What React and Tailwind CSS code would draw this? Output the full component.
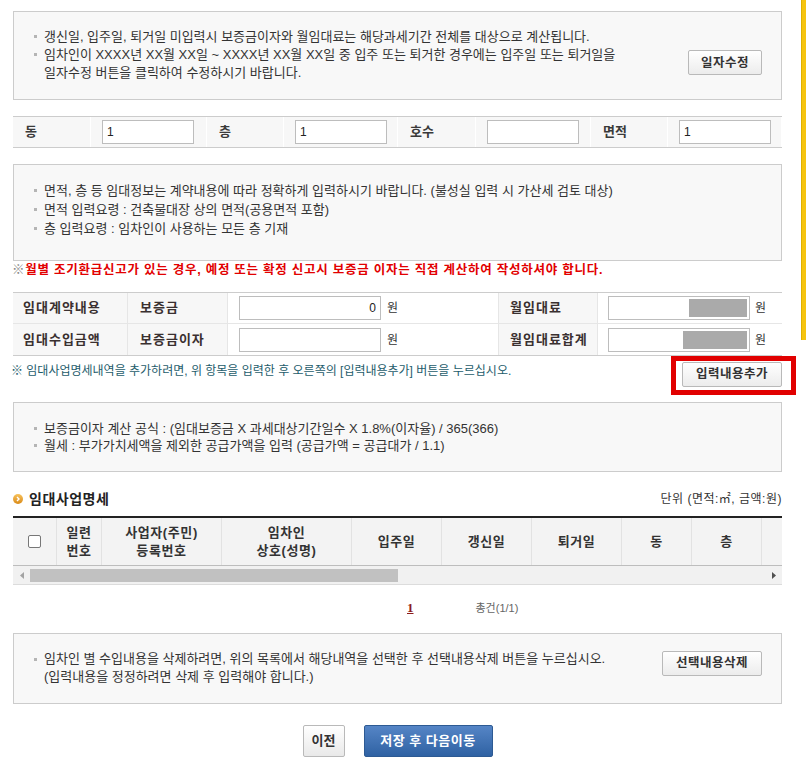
import React from "react";

function Line({ children, lh = "h-[18px]" }) {
  return (
    <div className="flex">
      <span className={`w-[10px] shrink-0 flex items-center ${lh}`}>
        <span className="block w-[3px] h-[3px] bg-[#b5b5b5]" />
      </span>
      <div>{children}</div>
    </div>
  );
}

function Btn({ children, className = "" }) {
  return (
    <button
      className={`h-[25px] px-[12px] border border-[#b9b9b9] rounded-[2px] bg-gradient-to-b from-white to-[#ececec] text-[12.5px] font-bold text-[#333] tracking-[0.5px] ${className}`}
    >
      {children}
    </button>
  );
}

const Input = ({ value = "", w = "w-[92px]", right = false }) => (
  <input
    readOnly
    value={value}
    className={`${w} h-[24px] border border-[#bdbdbd] bg-white px-[4px] text-[12px] text-[#222] outline-none ${right ? "text-right" : ""}`}
  />
);

function MaskedInput({ mask }) {
  return (
    <div className="relative w-[142px] h-[24px] border border-[#bdbdbd] bg-white">
      <div className={`absolute right-[2px] top-[2px] bottom-[2px] ${mask} bg-[#aaaaaa]`} />
    </div>
  );
}

export default function App() {
  return (
    <div className="relative w-[806px] min-h-[765px] bg-white font-['Liberation_Sans','Noto_Sans_CJK_KR',sans-serif] text-[12px] text-[#333]">
      <div className="absolute right-0 top-0 w-[5px] h-[340px] bg-[#f6c40f] border-l border-[#e0b000]" />
      <div className="pl-[13px] pr-[24px] pt-[11px]">
        {/* notice 1 */}
        <div className="h-[89px] border border-[#cccccc] bg-[#f8f8f8] flex items-center justify-between pl-[20px] pr-[19px] leading-[18px] text-[13px]">
          <div className="pb-[2px]">
            <Line>갱신일, 입주일, 퇴거일 미입력시 보증금이자와 월임대료는 해당과세기간 전체를 대상으로 계산됩니다.</Line>
            <Line>
              임차인이 XXXX년 XX월 XX일 ~ XXXX년 XX월 XX일 중 입주 또는 퇴거한 경우에는 입주일 또는 퇴거일을
              <br />
              일자수정 버튼을 클릭하여 수정하시기 바랍니다.
            </Line>
          </div>
          <Btn className="mt-[14px] shrink-0">일자수정</Btn>
        </div>

        {/* dong / floor row */}
        <div className="mt-[16px] grid grid-cols-[78px_116px_77px_114px_78px_115px_77px_114px] h-[32px] border-t border-b border-[#cccccc] bg-[#f7f7f7]">
          {[
            ["동", "1"],
            ["층", "1"],
            ["호수", ""],
            ["면적", "1"],
          ].map(([l, v]) => (
            <React.Fragment key={l}>
              <div className="flex items-center pl-[12px] font-bold text-[13px] text-[#3a3a3a] border-r border-white">{l}</div>
              <div className="flex items-center pl-[11px] border-r border-white">
                <Input value={v} />
              </div>
            </React.Fragment>
          ))}
        </div>

        {/* notice 2 */}
        <div className="mt-[16px] h-[97px] border border-[#cccccc] bg-[#f8f8f8] flex flex-col justify-center pl-[20px] leading-[19px] pb-[6px] text-[13px]">
          <Line lh="h-[19px]">면적, 층 등 임대정보는 계약내용에 따라 정확하게 입력하시기 바랍니다. (불성실 입력 시 가산세 검토 대상)</Line>
          <Line lh="h-[19px]">면적 입력요령 : 건축물대장 상의 면적(공용면적 포함)</Line>
          <Line lh="h-[19px]">층 입력요령 : 임차인이 사용하는 모든 층 기재</Line>
        </div>

        <p className="mt-[1px] h-[16px] leading-[16px] text-[12.5px] tracking-[0.75px] whitespace-nowrap -ml-[1px]">
          <span className="text-[#888] font-normal">※</span>
          <span className="text-[#e20000] font-bold">월별 조기환급신고가 있는 경우, 예정 또는 확정 신고시 보증금 이자는 직접 계산하여 작성하셔야 합니다.</span>
        </p>

        {/* amount table */}
        <div className="mt-[14px] border-t border-b border-[#cccccc]">
          {[
            ["임대계약내용", "보증금", "0", "월임대료", "w-[58px]"],
            ["임대수입금액", "보증금이자", "", "월임대료합계", "w-[64px]"],
          ].map(([a, b, v, c, m], i) => (
            <div
              key={a}
              className={`grid grid-cols-[115px_100px_270px_100px_184px] h-[31px] ${i === 0 ? "border-b border-[#e6e6e6]" : ""}`}
            >
              <div className="flex items-center pl-[10px] bg-[#f7f7f7] border-r border-[#e6e6e6] font-bold text-[13px] tracking-[1px] text-[#3a3030]">{a}</div>
              <div className="flex items-center pl-[12px] bg-[#f7f7f7] border-r border-[#e6e6e6] font-bold text-[13px] tracking-[1px] text-[#3a3030]">{b}</div>
              <div className="flex items-center pl-[11px] gap-[6px]">
                <Input value={v} w="w-[142px]" right />
                <span>원</span>
              </div>
              <div className="flex items-center pl-[11px] bg-[#f7f7f7] border-l border-r border-[#e6e6e6] font-bold text-[13px] tracking-[1px] text-[#3a3030]">{c}</div>
              <div className="flex items-center pl-[10px] gap-[5px]">
                <MaskedInput mask={m} />
                <span>원</span>
              </div>
            </div>
          ))}
        </div>

        <div className="flex items-start justify-between mt-[7px] h-[39px]">
          <p className="text-[#1d5c6b] leading-[16px] -ml-[2px]">
            ※ 임대사업명세내역을 추가하려면, 위 항목을 입력한 후 오른쪽의 [입력내용추가] 버튼을 누르십시오.
          </p>
          <div className="relative -mt-[1px]">
            <Btn className="w-[100px] px-0">입력내용추가</Btn>
            <div className="absolute -left-[11px] -right-[14px] -top-[6px] -bottom-[8px] border-[5px] border-[#e10000] pointer-events-none" />
          </div>
        </div>

        {/* notice 3 */}
        <div className="h-[70px] border border-[#cccccc] bg-[#f8f8f8] flex flex-col justify-center pl-[20px] leading-[17px] text-[13px]">
          <Line lh="h-[17px]">보증금이자 계산 공식 : (임대보증금 X 과세대상기간일수 X 1.8%(이자율) / 365(366)</Line>
          <Line lh="h-[17px]">월세 : 부가가치세액을 제외한 공급가액을 입력 (공급가액 = 공급대가 / 1.1)</Line>
        </div>

        {/* section header */}
        <div className="mt-[18px] flex items-center justify-between h-[18px]">
          <div className="flex items-center gap-[6px]">
            <span className="w-[10px] h-[10px] rounded-full bg-gradient-to-b from-[#f7c25a] to-[#d98a10] flex items-center justify-center">
              <svg width="6" height="6" viewBox="0 0 6 6">
                <path d="M2 1 L4 3 L2 5" stroke="white" strokeWidth="1.4" fill="none" />
              </svg>
            </span>
            <span className="font-bold text-[14px] tracking-[0.5px] text-[#222]">임대사업명세</span>
          </div>
          <span className="text-[12px] tracking-[0.5px] text-[#333]">단위 (면적:㎡, 금액:원)</span>
        </div>

        {/* list table */}
        <div className="mt-[8px] border-t-[2px] border-[#222]">
          <div className="grid grid-cols-[44px_45px_120px_130px_90px_90px_90px_70px_70px_20px] h-[48px] bg-[#f3f3f3] border-b border-[#bdbdbd] font-bold text-[13px] text-[#333] leading-[18px] tracking-[0.6px] text-center">
            <div className="flex items-center justify-center border-r border-[#e2e2e2]">
              <span className="w-[13px] h-[13px] border border-[#777] rounded-[2px] bg-white" />
            </div>
            <div className="flex items-center justify-center border-r border-[#e2e2e2]">일련<br />번호</div>
            <div className="flex items-center justify-center border-r border-[#e2e2e2]">사업자(주민)<br />등록번호</div>
            <div className="flex items-center justify-center border-r border-[#e2e2e2]">임차인<br />상호(성명)</div>
            <div className="flex items-center justify-center border-r border-[#e2e2e2]">입주일</div>
            <div className="flex items-center justify-center border-r border-[#e2e2e2]">갱신일</div>
            <div className="flex items-center justify-center border-r border-[#e2e2e2]">퇴거일</div>
            <div className="flex items-center justify-center border-r border-[#e2e2e2]">동</div>
            <div className="flex items-center justify-center border-r border-[#e2e2e2]">층</div>
            <div />
          </div>
          <div className="h-[19px] bg-[#f1f1f1] border-b border-[#dcdcdc] flex items-center">
            <span className="w-[17px] flex justify-center">
              <svg width="4" height="7" viewBox="0 0 4 7"><path d="M4 0 L0 3.5 L4 7Z" fill="#a3a3a3" /></svg>
            </span>
            <span className="w-[368px] h-[13px] bg-[#c1c1c1]" />
            <span className="flex-1" />
            <span className="w-[17px] flex justify-center">
              <svg width="4" height="7" viewBox="0 0 4 7"><path d="M0 0 L4 3.5 L0 7Z" fill="#505050" /></svg>
            </span>
          </div>
        </div>

        {/* pagination */}
        <div className="mt-[15px] h-[16px] flex items-center">
          <span className="ml-[394px] font-['Liberation_Serif',serif] font-bold text-[13px] text-[#8b1b1b] underline">1</span>
          <span className="ml-[62px] text-[11px] text-[#666]">총건(1/1)</span>
        </div>

        {/* notice 4 */}
        <div className="mt-[17px] h-[71px] border border-[#cccccc] bg-[#f8f8f8] flex items-center justify-between pl-[20px] pr-[19px] leading-[18px] text-[13px]">
          <div className="pb-[1px]">
            <Line>
              임차인 별 수입내용을 삭제하려면, 위의 목록에서 해당내역을 선택한 후 선택내용삭제 버튼을 누르십시오.
              <br />
              (입력내용을 정정하려면 삭제 후 입력해야 합니다.)
            </Line>
          </div>
          <Btn className="-mt-[11px] w-[100px] px-0 shrink-0">선택내용삭제</Btn>
        </div>

        {/* bottom buttons */}
        <div className="mt-[21px] flex justify-center gap-[19px] pb-[7px]">
          <button className="h-[32px] w-[42px] border border-[#b9b9b9] rounded-[2px] bg-gradient-to-b from-white to-[#e9e9e9] font-bold text-[13px] text-[#333]">
            이전
          </button>
          <button className="h-[32px] w-[129px] border border-[#2d5a93] rounded-[2px] bg-gradient-to-b from-[#5585c6] to-[#2f62a3] font-bold text-[13px] text-white tracking-[0.5px]">
            저장 후 다음이동
          </button>
        </div>
      </div>
    </div>
  );
}
